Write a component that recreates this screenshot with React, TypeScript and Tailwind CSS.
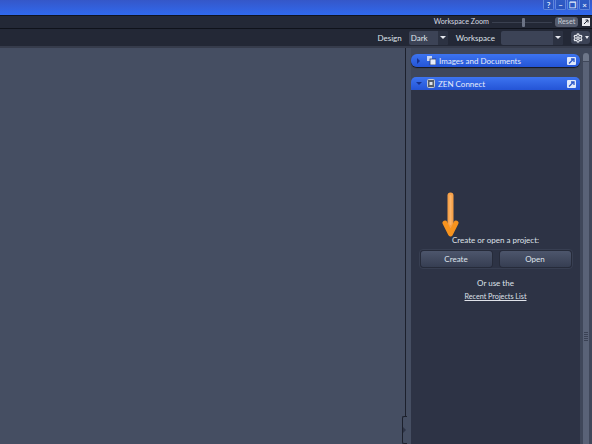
import { Settings } from 'lucide-react';

const font = { fontFamily: 'Lato, "Open Sans", sans-serif' };

function WinButton({ children }: { children: React.ReactNode }) {
  return (
    <div className="w-[11px] h-[10px] flex items-center justify-center rounded-b-[2px] bg-gradient-to-b from-[#2f5bc4] to-[#2a55c0] border border-[#5f86dc] border-t-0 text-[#dfe8fb] text-[8px] font-bold leading-none">
      {children}
    </div>
  );
}

function DockIcon() {
  return (
    <svg width="9" height="8" viewBox="0 0 9 8" className="shrink-0">
      <path d="M1 0 H8 a1 1 0 0 1 1 1 V7 a1 1 0 0 1 -1 1 H1 a1 1 0 0 1 -1 -1 V1 a1 1 0 0 1 1 -1 Z" fill="#dfe8fb" />
      <path d="M2 6.5 L6 2.5 M4 2 H7 V5" fill="none" stroke="#2a55c8" strokeWidth="1.3" />
    </svg>
  );
}

function Caret() {
  return (
    <div className="w-[10px] h-full flex items-center justify-center bg-[#2c3242] rounded-r-[2px]">
      <div className="w-0 h-0 border-l-[3px] border-r-[3px] border-t-[3px] border-l-transparent border-r-transparent border-t-[#e6e8ee]" />
    </div>
  );
}

function PanelHeader({ title, open, icon }: { title: string; open: boolean; icon: React.ReactNode }) {
  return (
    <div className={`h-[13px] flex items-center pl-[5px] pr-[4px] bg-gradient-to-b from-[#3d74f0] to-[#2454d6] ${open ? 'rounded-t-[5px]' : 'rounded-[6px] shadow-[0_1px_1px_#14171f]'}`}>
      {open ? (
        <div className="w-0 h-0 mr-[5px] border-l-[3px] border-r-[3px] border-t-[3px] border-l-transparent border-r-transparent border-t-[#16328f]" />
      ) : (
        <div className="w-0 h-0 ml-[1px] mr-[7px] border-t-[3px] border-b-[3px] border-l-[3px] border-t-transparent border-b-transparent border-l-[#16328f]" />
      )}
      {icon}
      <span className="ml-[3px] text-[8px] text-[#e6ecfb] leading-none flex-1">{title}</span>
      <DockIcon />
    </div>
  );
}

function ActionButton({ label }: { label: string }) {
  return (
    <div className="w-[71px] h-[16px] flex items-center justify-center rounded-[3px] bg-gradient-to-b from-[#4d566c] to-[#363e52] shadow-[0_0_0_1px_#262b3a] text-[8px] text-[#dfe3ec]">
      {label}
    </div>
  );
}

export default function App() {
  return (
    <div className="relative w-[592px] h-[444px] overflow-hidden flex flex-col bg-[#454e62]" style={font}>
      <div className="h-[15px] shrink-0 flex justify-end gap-[1px] pr-[2px] bg-gradient-to-b from-[#3557c8] to-[#2f69ee]">
        <WinButton>?</WinButton>
        <WinButton>–</WinButton>
        <WinButton>❐</WinButton>
        <WinButton>×</WinButton>
      </div>

      <div className="h-[14px] shrink-0 flex items-center justify-end pr-[2px] bg-[#232836] border-t border-[#101420] border-b border-b-[#0f121b] text-[7.2px] text-[#d5d8e0]">
        <span>Workspace Zoom</span>
        <div className="relative w-[60px] h-[1px] ml-[3px] bg-[#3a4050]">
          <div className="absolute left-[30px] top-[-4px] w-[3px] h-[9px] rounded-[1px] bg-[#6c7385]" />
        </div>
        <div className="ml-[3px] w-[23px] h-[10px] flex items-center justify-center rounded-[3px] bg-[#555c6e] text-[#c9ccd4]">Reset</div>
        <div className="ml-[4px] w-[8px] h-[8px] flex items-center justify-center bg-[#e6e8ee]">
          <svg width="6" height="6" viewBox="0 0 6 6">
            <path d="M1 5 L5 1 M2.5 1 H5 V3.5" fill="none" stroke="#232836" strokeWidth="1" />
          </svg>
        </div>
      </div>

      <div className="h-[19px] shrink-0 flex items-center justify-end pr-[2px] bg-[#232836] border-b-2 border-[#363c4c] text-[8px] text-[#dfe2e9]">
        <span>Design</span>
        <div className="ml-[7px] w-[39px] h-[14px] flex items-center rounded-[2px] bg-[#3c4356] pl-[2px]">
          <span className="flex-1">Dark</span>
          <Caret />
        </div>
        <span className="ml-[8px]">Workspace</span>
        <div className="ml-[6px] w-[62px] h-[14px] flex justify-end rounded-[2px] bg-[#3c4356]">
          <Caret />
        </div>
        <div className="ml-[8px] w-[19px] h-[13px] flex items-center justify-center gap-[2px] rounded-[3px] bg-[#3c4356]">
          <Settings size={10} strokeWidth={3} color="#e6e8ee" />
          <div className="w-0 h-0 border-l-[2.5px] border-r-[2.5px] border-t-[3px] border-l-transparent border-r-transparent border-t-[#e6e8ee]" />
        </div>
      </div>

      <div className="flex-1 flex min-h-0">
        <div className="flex-1 bg-[#454e62]" />
        <div className="w-[187px] shrink-0 flex bg-[#3f475a] border-l border-[#1c202c]">
          <div className="w-[5px] shrink-0 bg-[#454e62]" />
          <div className="flex-1 flex flex-col gap-[10px] pt-[6px]">
            <PanelHeader
              title="Images and Documents"
              open={false}
              icon={
                <svg width="9" height="9" viewBox="0 0 9 9" className="shrink-0">
                  <rect x="0" y="0" width="5" height="5" fill="#cdd7ee" />
                  <rect x="3" y="3" width="6" height="6" fill="#e8edf8" stroke="#2a3a6a" strokeWidth="0.8" />
                </svg>
              }
            />
            <div className="flex-1 flex flex-col">
              <PanelHeader
                title="ZEN Connect"
                open
                icon={
                  <svg width="8" height="9" viewBox="0 0 8 9" className="shrink-0">
                    <rect x="0.5" y="0.5" width="7" height="8" rx="1" fill="#555d68" stroke="#c4cad4" />
                    <rect x="2.5" y="3" width="3" height="3" fill="#dde2ea" />
                  </svg>
                }
              />
              <div className="flex-1 flex flex-col items-center bg-[#2d3345] pt-[145px] text-[8px] text-[#dfe2e9]">
                <span className="leading-[11px]">Create or open a project:</span>
                <div className="mt-[3px] flex gap-[8px] p-[1px] rounded-[4px] border border-[#373e51]">
                  <ActionButton label="Create" />
                  <ActionButton label="Open" />
                </div>
                <span className="mt-[9px] leading-[11px]">Or use the</span>
                <span className="mt-[2px] leading-[11px] text-[7.2px] underline">Recent Projects List</span>
              </div>
            </div>
          </div>
          <div className="w-[11px] shrink-0 ml-[1px] pr-[2px] flex flex-col items-center pt-[5px] bg-[#3f475a]">
            <div className="w-[6px] h-[8px] rounded-t-[3px] bg-[#6d7689]" />
            <div className="mt-[1px] w-[6px] flex-1 flex flex-col items-center pt-[270px] gap-[1px] bg-[#596277]">
              {[0, 1, 2, 3, 4].map(i => (
                <div key={i} className="w-[4px] h-[1px] bg-[#3a4154]" />
              ))}
            </div>
          </div>
        </div>
      </div>

      <svg className="absolute left-[441px] top-[192px]" width="20" height="50" viewBox="0 0 20 50">
        <path d="M9.5 3.5 V38" fill="none" stroke="#f7a24a" strokeWidth="6" strokeLinecap="round" />
        <path d="M4 31 L9.5 42 L15 31" fill="none" stroke="#f7931e" strokeWidth="5" strokeLinecap="round" strokeLinejoin="round" />
        <path d="M9.5 4 V32" fill="none" stroke="#fbb469" strokeWidth="2" strokeLinecap="round" />
      </svg>

      <div className="absolute left-[402px] top-[416px] w-[5px] h-[28px] flex items-center rounded-l-[2px] bg-[#454e62] border border-r-0 border-[#1c202c]">
        <div className="w-0 h-0 border-t-[3px] border-b-[3px] border-l-[3px] border-t-transparent border-b-transparent border-l-[#2d3345]" />
      </div>
    </div>
  );
}
